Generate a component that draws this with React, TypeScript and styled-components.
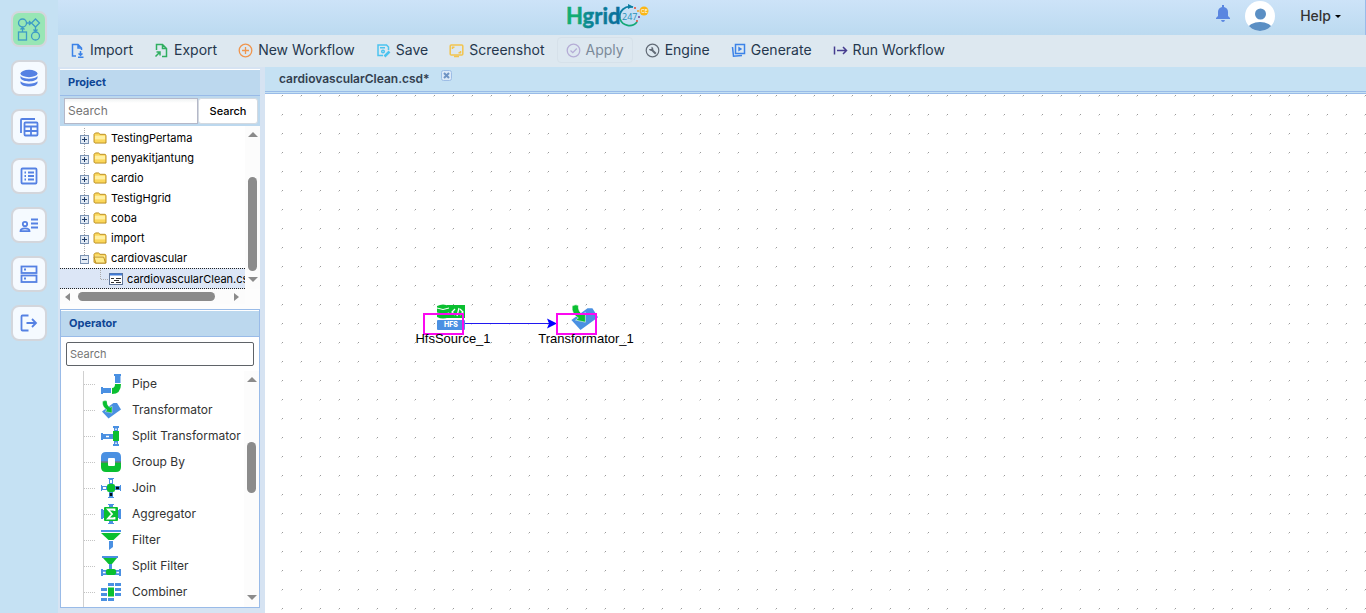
import React from "react";
import styled, { createGlobalStyle } from "styled-components";

const GlobalStyle = createGlobalStyle`
  * { box-sizing: border-box; }
  body { margin: 0; background: #d6e3f2; font-family: Inter, "Liberation Sans", sans-serif; color: #000; }
  button, input { font-family: inherit; margin: 0; }
  button { cursor: pointer; }
  ul { list-style: none; margin: 0; padding: 0; }
  h2 { margin: 0; }
  svg { display: block; flex: none; }
`;

/* ---------- shell ---------- */

const Shell = styled.div`
  display: flex;
  height: 100vh;
  overflow: hidden;
`;

const Rail = styled.nav`
  flex: none;
  width: 58px;
  padding: 11px 0 0 11px;
  display: flex;
  flex-direction: column;
  gap: 13px;
  background: #c5e1f3;
`;

const RailButton = styled.button<{ $active?: boolean }>`
  width: 36px;
  height: 36px;
  padding: 0;
  display: flex;
  align-items: center;
  justify-content: center;
  border: 2px solid #d3d6dc;
  border-radius: 8px;
  background: ${(p) => (p.$active ? "#98e6b5" : "#f5faff")};
  color: ${(p) => (p.$active ? "#3d9cc6" : "#5581e3")};
`;

const Main = styled.div`
  flex: 1;
  min-width: 0;
  display: flex;
  flex-direction: column;
`;

const Header = styled.header`
  flex: none;
  height: 35px;
  display: grid;
  grid-template-columns: 1fr auto 1fr;
  align-items: center;
  background: linear-gradient(#cde3f8, #bbdaf0);
  border-right: 1px solid #99bbe8;
`;

const Brand = styled.div`
  grid-column: 2;
  margin-right: 208px;
`;

const Account = styled.div`
  grid-column: 3;
  justify-self: end;
  display: flex;
  align-items: center;
  padding-right: 24px;
`;

const IconButton = styled.button`
  padding: 0;
  border: 0;
  background: none;
  display: flex;
`;

const BellButton = styled(IconButton)`
  margin: 0 15px 8px 0;
`;

const ProfileButton = styled(IconButton)`
  margin-bottom: 3px;
`;

const HelpButton = styled(IconButton)`
  align-items: center;
  gap: 4px;
  margin: 0 0 3px 25px;
  font-size: 14px;
  line-height: 20px;
  font-weight: 500;
  color: #333;
`;

const Toolbar = styled.div`
  flex: none;
  height: 32px;
  padding: 2px 3px 4px;
  display: flex;
  gap: 3px;
  background: #dde8f0;
`;

const ToolButton = styled.button`
  height: 26px;
  padding: 0 8px;
  display: flex;
  align-items: center;
  gap: 5px;
  border: 1px solid transparent;
  border-radius: 4px;
  background: none;
  font-size: 14px;
  line-height: 20px;
  color: #25374d;
  white-space: nowrap;
  &:disabled {
    color: #7b8a99;
    border-color: #d6e1ea;
  }
`;

const Workspace = styled.div`
  flex: 1;
  min-height: 0;
  display: flex;
  gap: 5px;
`;

const Side = styled.aside`
  flex: none;
  width: 202px;
  padding: 2px 0 5px 2px;
  display: flex;
  flex-direction: column;
`;

/* ---------- panels ---------- */

const PanelTitle = styled.h2`
  flex: none;
  height: 27px;
  padding: 0 8px;
  border-top: 1px solid #fff;
  border-bottom: 1px solid #99bbe8;
  background: #bcd8ee;
  color: #0d4595;
  font-size: 11px;
  line-height: 25px;
  font-weight: 700;
`;

const ProjectPanel = styled.section`
  flex: none;
  background: #fff;
`;

const ProjectSearch = styled.form`
  display: flex;
  height: 30px;
  padding: 2px 2px 2px 4px;
  background: #bcd8ee;
`;

const ProjectInput = styled.input`
  flex: 1;
  min-width: 0;
  padding: 0 3px 1px;
  border: 1px solid #b5b8c8;
  background: linear-gradient(#f0f3f3, #fff 4px);
  font-size: 12px;
  outline: 0;
  &::placeholder { color: #757575; }
`;

const SearchButton = styled.button`
  width: 60px;
  padding: 0;
  border: 1px solid #d3d9e0;
  border-radius: 3px;
  background: #fff;
  font-size: 11px;
  font-weight: 500;
  color: #000;
`;

const TreeBox = styled.div`
  display: flex;
  height: 163px;
`;

const TreeList = styled.ul`
  flex: 1;
  min-width: 0;
  padding-top: 2px;
  overflow: hidden;
`;

const TreeItem = styled.li<{ $selected?: boolean }>`
  height: ${(p) => (p.$selected ? 21 : 20)}px;
  padding-left: ${(p) => (p.$selected ? 40 : 20)}px;
  display: flex;
  align-items: center;
  gap: 4px;
  white-space: nowrap;
  font-size: 11px;
  line-height: 18px;
  color: #000;
  border-top: ${(p) => (p.$selected ? "1px dotted #222" : "0")};
  border-bottom: ${(p) => (p.$selected ? "1px dotted #222" : "0")};
  background: ${(p) => (p.$selected ? "#dce6f6" : "none")};
`;

const Elbow = styled.svg`
  margin-right: -4px;
`;

const Bar = styled.div<{ $row?: boolean }>`
  flex: none;
  display: flex;
  flex-direction: ${(p) => (p.$row ? "row" : "column")};
  align-items: center;
  ${(p) => (p.$row ? "height: 15px; padding: 0 6px 0 5px;" : "width: 15px; padding: 6px 0 7px;")}
  background: #fcfcfc;
`;

const Thumb = styled.div<{ $before: number; $size: number; $row?: boolean }>`
  border-radius: 5px;
  background: #8b8b8b;
  flex: none;
  ${(p) =>
    p.$row
      ? `width: ${p.$size}px; height: 9px; margin: 0 auto 0 ${p.$before}px;`
      : `height: ${p.$size}px; width: 9px; margin: ${p.$before}px 0 auto;`}
`;

const TreeColumn = styled.div`
  flex: 1;
  min-width: 0;
  display: flex;
  flex-direction: column;
`;

const HorizontalBar = styled.div`
  height: 20px;
  padding: 0 15px 5px 0;
  background: #fdfdfd;
`;

const OperatorPanel = styled.section`
  flex: 1;
  min-height: 0;
  display: flex;
  flex-direction: column;
  border: 1px solid #99bbe8;
  background: #fff;
`;

const OperatorInput = styled.input`
  flex: none;
  height: 24px;
  margin: 5px 5px;
  padding: 0 3px;
  border: 1px solid #5f6368;
  border-radius: 2px;
  font-size: 11px;
  outline: 0;
  &::placeholder { color: #757575; }
`;

const OperatorBox = styled.div`
  flex: 1;
  min-height: 0;
  display: flex;
  overflow: hidden;
`;

const OperatorList = styled.ul`
  flex: 1;
  min-width: 0;
  margin-left: 22px;
  border-left: 1px solid #d0d0d0;
`;

const OperatorItem = styled.li`
  height: 26px;
  display: flex;
  align-items: center;
  font-size: 12px;
  line-height: 20px;
  color: #333;
  white-space: nowrap;
  &::before {
    content: "";
    width: 11px;
    margin-right: 6px;
    border-top: 1px dotted #c4c4c4;
  }
  svg { margin-right: 11px; }
`;

/* ---------- editor ---------- */

const Editor = styled.main`
  flex: 1;
  min-width: 0;
  display: flex;
  flex-direction: column;
`;

const TabStrip = styled.div`
  flex: none;
  height: 27px;
  padding: 0 14px;
  display: flex;
  gap: 11px;
  background: #c5e1f3;
  border-bottom: 3px double #99bbe8;
  font-size: 12px;
  line-height: 23px;
  font-weight: 600;
  color: #333f4f;
`;

const CloseButton = styled(IconButton)`
  margin-top: 3px;
  height: 11px;
`;

const Canvas = styled.div`
  position: relative;
  flex: 1;
  overflow: hidden;
  background: #fff;
`;

const GridLayer = styled.svg`
  width: 100%;
  height: 100%;
`;

const NodeMark = styled.div<{ $x: number; $y: number }>`
  position: absolute;
  left: ${(p) => p.$x}px;
  top: ${(p) => p.$y}px;
`;

const Selection = styled(NodeMark)`
  width: 41px;
  height: 22px;
  border: 2px solid #fb09f0;
`;

const NodeLabel = styled(NodeMark)`
  transform: translateX(-50%);
  font: 13px/16px "Liberation Sans", Arial, sans-serif;
  white-space: nowrap;
`;

/* ---------- small icons ---------- */

const B = "#4a90e2";
const G = "#0abf30";

const Arrow = ({ dir }: { dir: "up" | "down" | "left" | "right" }) => {
  const shapes = { up: "M0 5L5 0L10 5Z", down: "M0 0L5 5L10 0Z", left: "M5 0L0 4L5 8Z", right: "M0 0L5 4L0 8Z" };
  const flat = dir === "up" || dir === "down";
  return (
    <svg width={flat ? 10 : 5} height={flat ? 5 : 8}>
      <path d={shapes[dir]} fill="#8b8b8b" />
    </svg>
  );
};

const Stroke = ({ size = 20, color = "currentColor", width = 1.5, box = 20, children }: any) => (
  <svg width={size} height={size} viewBox={`0 0 ${box} ${box}`} fill="none" stroke={color} strokeWidth={width}>
    {children}
  </svg>
);

const railItems = [
  {
    label: "Workflow",
    icon: (
      <Stroke size={24} box={24} width={1.3}>
        <circle cx="5.500" cy="6" r="4" />
        <path d="M18.500 2L22.500 6L18.500 10L14.500 6Z" />
        <rect x="1.500" y="15" width="8" height="8" />
        <circle cx="18.500" cy="19" r="4" />
        <path d="M9.500 6H14M12 4L14 6L12 8M5.500 15V10.500M3.500 12.500L5.500 10.500L7.500 12.500M18.500 10V14.500M16.500 12.500L18.500 14.500L20.500 12.500" />
      </Stroke>
    ),
  },
  {
    label: "Data",
    icon: (
      <svg width="18" height="18" viewBox="0 0 18 18" fill="currentColor">
        <ellipse cx="9" cy="4.500" rx="8.500" ry="3.700" />
        <path d="M.5 7C3 10.500 15 10.500 17.500 7V9C16 13.500 2 13.500 .5 9Z" />
        <path d="M.5 12.200C3 15.500 15 15.500 17.500 12.200V14C16 18.700 2 18.700 .5 14Z" />
      </svg>
    ),
  },
  {
    label: "Tables",
    icon: (
      <Stroke width={1.8}>
        <path d="M2 16V3Q2 2 3 2H16" />
        <rect x="5.500" y="5.500" width="13" height="13" rx="1" />
        <path d="M5.500 9.500H18.500M5.500 14H18.500M12 9.500V18.500" />
      </Stroke>
    ),
  },
  {
    label: "List",
    icon: (
      <Stroke width={1.8}>
        <rect x="2.500" y="2.500" width="15" height="15" rx="1" />
        <path d="M5.500 6.500H7M9 6.500H15M5.500 10H7M9 10H15M5.500 13.500H7M9 13.500H15" />
      </Stroke>
    ),
  },
  {
    label: "Users",
    icon: (
      <Stroke width={1.8}>
        <circle cx="6" cy="9" r="2.200" />
        <path d="M1.500 16.200C1.500 12.500 10.500 12.500 10.500 16.200ZM12 4.500H19M12 8.500H19M12 12.500H19" />
      </Stroke>
    ),
  },
  {
    label: "Server",
    icon: (
      <Stroke width={1.8}>
        <rect x="2.500" y="2.500" width="15" height="6.500" />
        <rect x="2.500" y="11.500" width="15" height="6.500" />
        <path d="M5 5.500H7M5 14.500H7" />
      </Stroke>
    ),
  },
  {
    label: "Log out",
    icon: (
      <Stroke width={1.8}>
        <path d="M9.500 2.500H3.500Q2.500 2.500 2.500 3.500V16.500Q2.500 17.500 3.500 17.500H9.500M7.500 10H17M13 6L17 10L13 14" />
      </Stroke>
    ),
  },
];

const tools = [
  {
    label: "Import",
    icon: (
      <Stroke size={15} box={15} color="#3b82e8">
        <path d="M6 13H2.500V1.500H8L11.500 5V7M8 1.500V5H11.500M10.500 8V12M8.500 10.500L10.500 12.300L12.500 10.500M8 14.300H13.500" />
      </Stroke>
    ),
  },
  {
    label: "Export",
    icon: (
      <Stroke size={15} box={15} color="#2fae60">
        <path d="M2.500 7V1.500H8.500L12.500 5.500V13.500H8M8.500 1.500V5.500H12.500M1.500 13.500L6 9M2.500 9H6V12.500" />
      </Stroke>
    ),
  },
  {
    label: "New Workflow",
    icon: (
      <Stroke size={15} box={15} color="#f0954d" width={1.3}>
        <circle cx="7.500" cy="7.500" r="6.300" />
        <path d="M7.500 4V11M4 7.500H11" />
      </Stroke>
    ),
  },
  {
    label: "Save",
    icon: (
      <Stroke size={15} box={15} color="#4cc3ef">
        <path d="M7 12.500H2V2H10.500L12.500 4V7M4 4.700H9" />
        <circle cx="7" cy="8.500" r="1.300" />
        <path d="M8.500 13.500L13.500 8.500" strokeWidth={2.5} />
      </Stroke>
    ),
  },
  {
    label: "Screenshot",
    icon: (
      <Stroke size={15} box={15} color="#f2c44e">
        <rect x="1.200" y="2" width="12.600" height="10" rx="1" />
        <path d="M3.500 6V4.300H5.500M11.500 8V9.800H9.500M5 13.500H10" />
      </Stroke>
    ),
  },
  {
    label: "Apply",
    disabled: true,
    icon: (
      <Stroke size={15} box={15} color="#b5add6" width={1.3}>
        <circle cx="7.500" cy="7.500" r="6.300" />
        <path d="M4.500 7.500L6.800 9.700L10.800 5.500" />
      </Stroke>
    ),
  },
  {
    label: "Engine",
    icon: (
      <Stroke size={15} box={15} color="#626b76" width={1.2}>
        <circle cx="7.500" cy="7.500" r="6.300" />
        <path d="M7 7L10.800 10.800" strokeWidth={2} />
        <path d="M4 6A2.500 2.500 0 0 0 8 7.500A2.500 2.500 0 0 0 6.500 3.800V6H4Z" fill="#626b76" stroke="none" />
      </Stroke>
    ),
  },
  {
    label: "Generate",
    icon: (
      <Stroke size={15} box={15} color="#3b82e8">
        <rect x="4.500" y="1.500" width="9" height="9" />
        <path d="M1.500 4L2.500 13.300L11 12.500" />
        <path d="M7.300 3.500L11.300 6L7.300 8.500Z" fill="#3b82e8" stroke="none" />
      </Stroke>
    ),
  },
  {
    label: "Run Workflow",
    icon: (
      <Stroke size={15} box={15} color="#463c8f">
        <path d="M1.500 3.500V11.500M4 7.500H13.500M10 4L13.500 7.500L10 11" />
      </Stroke>
    ),
  },
];

const Expander = ({ open }: { open?: boolean }) => (
  <svg width="9" height="20">
    <path d={open ? "M4.500 0V7" : "M4.500 0V20"} stroke="#aaa" strokeDasharray="1 1" />
    <rect x="0.500" y="7.500" width="8" height="8" fill="#e3ebf5" stroke="#7b93b4" />
    <path d={open ? "M2 11.500H7" : "M2 11.500H7M4.500 9V14"} stroke="#1f3c68" />
  </svg>
);

const Folder = ({ open }: { open?: boolean }) => (
  <svg width="14" height="12" viewBox="0 0 14 13">
    <path d="M.5 11V2.500L2 1H5.500L7 2.500H12.500L13.500 3.500V12H1.500Z" fill="#fbd75b" stroke="#b78a1c" />
    <path d="M1.500 4H12.500V8H1.500Z" fill="#fff0a3" />
    {open && <path d="M.5 5.500H11L13 12H2.500Z" fill="#ffeb8a" stroke="#b78a1c" />}
  </svg>
);

const FileIcon = () => (
  <svg width="14" height="12">
    <rect x="0.500" y="0.500" width="13" height="11" fill="#fff" stroke="#5d7396" />
    <path d="M1 1.500H13" stroke="#3f7bd8" strokeWidth="2" />
    <path d="M2 5.500H5M7 5.500H12M5 7.500H10M2 9.500H5M7 9.500H12" stroke="#333" />
  </svg>
);

const TransformShape = () => (
  <>
    <path d="M1 11.500L12.500 3H16L20 9.500L7.500 18.500Z" fill={B} />
    <path d="M1.500 1.500Q4 0 6 1Q5.500 5 9 7.500L11 6V13L4 11.500L6 10Q1 7 1.500 1.500Z" fill={G} stroke="#fff" strokeWidth=".4" />
  </>
);

const operators: [string, React.ReactNode][] = [
  ["Pipe", <><path d="M13 0H20V2H19.500V9H14V2H13ZM0 13H2V14H10V19H2V20H0Z" fill={B} /><path d="M14 10H20Q20 20 11 20V14Q14 14 14 10Z" fill={G} /></>],
  ["Transformator", <TransformShape />],
  ["Split Transformator", <><path d="M12 0H18V2H17V18H18V20H12V18H13V2H12ZM0 7H2V8H12V13H2V14H0Z" fill={B} /><path d="M12 5H18V15H12Z" fill={G} /><path d="M5 10.500H8M15 2.500V4M15 16.500V18" stroke="#fff" strokeWidth="1.500" /></>],
  ["Group By", <><path d="M0 9.500V5Q0 0 5 0H15Q20 0 20 5V9.500Z" fill={B} /><path d="M0 10.500V15Q0 20 5 20H15Q20 20 20 15V10.500Z" fill={G} /><path d="M0 10H20" stroke="#234" /><rect x="7" y="6" width="7" height="8" rx="1" fill="#fff" /></>],
  ["Join", <><path d="M7 0H13V1H12V8H19V7H20V13H19V12H12V19H13V20H7V19H8V12H1V13H0V7H1V8H8V1H7Z" fill={B} /><rect x="6" y="6" width="8" height="8" rx="2" fill={G} /><path d="M10 2V5M2 10H5" stroke="#fff" strokeWidth="2" /><path d="M10 15V18M15 10H18" stroke="#011" strokeWidth="2.500" /></>],
  ["Aggregator", <><path d="M7 0H13V1H12V19H13V20H7V19H8V1H7ZM0 5H2V6H18V5H20V15H18V14H2V15H0Z" fill={B} /><rect x="3" y="3" width="14" height="14" rx="1" fill={G} /><path d="M13.500 7V5.500H7L11 10L7 14.500H13.500V13" fill="none" stroke="#fff" strokeWidth="1.800" /></>],
  ["Filter", <><path d="M0 0H20V2H0ZM8 11H12V17L8 20Z" fill={B} /><path d="M0 3H20L12.500 10H7.500Z" fill={G} /></>],
  ["Split Filter", <><path d="M1 0H17V2H1ZM8 8H11V14H18V13H20V20H18V19H2V20H0V13H2V14H8Z" fill={B} /><path d="M2 2H16L11 8H7.500Z" fill={G} /><rect x="5" y="13" width="10" height="6" rx="2" fill={G} /><path d="M2 16.500H4.500M15.500 16.500H18" stroke="#fff" strokeWidth="1.500" /></>],
  ["Combiner", <><path d="M7 2.500H13M14 2.500H20M0 7.500H6M14 7.500H20M0 12.500H6M14 12.500H20M0 17.500H6M7 17.500H13" stroke={B} strokeWidth="3" /><path d="M7 5.500H13V14.500H7Z" fill={G} /></>],
];

const folders = ["TestingPertama", "penyakitjantung", "cardio", "TestigHgrid", "coba", "import", "cardiovascular"];

const Logo = () => (
  <svg width="82" height="32" viewBox="0 0 82 32" role="img" aria-label="Hgrid247">
    <defs>
      <linearGradient id="brand" x1="0" x2="1">
        <stop offset="0.200" stopColor="#12ad72" />
        <stop offset="0.400" stopColor="#0b8793" />
        <stop offset="1" stopColor="#0a6d9c" />
      </linearGradient>
    </defs>
    <text x="-1" y="22" fill="url(#brand)" stroke="url(#brand)" strokeWidth=".5" fontFamily="Lato, sans-serif" fontWeight="700" fontSize="22">Hgrid</text>
    <path d="M66 5.200A10 10 0 0 0 53 17" fill="none" stroke="#0c7ea3" strokeWidth="1.800" />
    <path d="M53 17A10 10 0 0 0 70 20" fill="none" stroke="#14a878" strokeWidth="1.800" />
    <path d="M61 2L66 4.500L61 7Z" fill="#0c7ea3" />
    <text x="55" y="18" fill="#278fb5" fontFamily="'Open Sans', sans-serif" fontSize="9">247</text>
    <circle cx="68" cy="6" r="1" fill="#e34a32" />
    <circle cx="71" cy="9" r="1" fill="#f0a029" />
    <circle cx="72" cy="15" r="1" fill="#704296" />
    <circle cx="70" cy="19" r="1" fill="#e34a32" />
    <circle cx="77" cy="9" r="4.500" fill="#fbb615" />
    <text x="74" y="11" fill="#fff" fontFamily="Inter, sans-serif" fontSize="5">CE</text>
  </svg>
);

const Flow = () => (
  <Canvas>
    <GridLayer>
      <defs>
        <pattern id="dots" x="16" y="1" width="19" height="19" patternUnits="userSpaceOnUse">
          <rect x="1" width="1" height="1" fill="#999" />
          <rect y="1" width="1" height="1" fill="#ddd" />
        </pattern>
      </defs>
      <rect width="100%" height="100%" fill="url(#dots)" />
      <path d="M200 229.500H284" stroke="#2018f0" />
      <path d="M282 224.500L292 229.500L282 234.500L284 229.500Z" fill="#0000ff" />
      <g transform="translate(172 210)">
        <path d="M10 1H28V14H10Z" fill={G} />
        <path d="M0 2Q6-1 12 2V13Q6 16 0 13Z" fill={G} />
        <path d="M0 4Q6 7 12 4M0 9Q6 12 12 9" fill="none" stroke="#fff" />
        <path d="M18 5L15 8L18 11M23 5L26 8L23 11M22 4L20 12" fill="none" stroke="#fff" strokeWidth="1.300" />
        <rect y="16" width="28" height="10" rx="1" fill={B} />
        <text x="7" y="23" fontFamily="Inter, sans-serif" fontSize="7" fontWeight="800" fill="#fff">HFS</text>
      </g>
      <g transform="translate(305 210) scale(1.400)"><TransformShape /></g>
    </GridLayer>
    <Selection $x={158} $y={219} />
    <Selection $x={291} $y={219} />
    <NodeLabel $x={188} $y={237}>HfsSource_1</NodeLabel>
    <NodeLabel $x={321} $y={237}>Transformator_1</NodeLabel>
  </Canvas>
);

export default function App() {
  return (
    <>
      <GlobalStyle />
      <Shell>
        <Rail>
          {railItems.map((r, i) => (
            <RailButton key={r.label} $active={i === 0} aria-label={r.label}>{r.icon}</RailButton>
          ))}
        </Rail>
        <Main>
          <Header>
            <Brand><Logo /></Brand>
            <Account>
              <BellButton aria-label="Notifications">
                <svg width="14" height="17" viewBox="0 0 14 17" fill="#5a86e0">
                  <path d="M6 0H8V2Q12 3 12 7V11L14 13V14H0V13L2 11V7Q2 3 6 2ZM5 15H9Q8.500 17 7 17Q5.500 17 5 15Z" />
                </svg>
              </BellButton>
              <ProfileButton aria-label="Profile">
                <svg width="30" height="30" viewBox="0 0 30 30">
                  <clipPath id="face"><circle cx="15" cy="15" r="15" /></clipPath>
                  <g clipPath="url(#face)">
                    <rect width="30" height="30" fill="#fff" />
                    <circle cx="15.500" cy="13" r="5.500" fill="#5b8fc4" />
                    <ellipse cx="15" cy="28" rx="12" ry="7" fill="#5b8fc4" />
                  </g>
                </svg>
              </ProfileButton>
              <HelpButton>
                Help
                <svg width="6" height="3"><path d="M0 0H6L3 3Z" fill="#000" /></svg>
              </HelpButton>
            </Account>
          </Header>
          <Toolbar>
            {tools.map((t) => (
              <ToolButton key={t.label} disabled={t.disabled}>{t.icon}{t.label}</ToolButton>
            ))}
          </Toolbar>
          <Workspace>
            <Side>
              <ProjectPanel>
                <PanelTitle>Project</PanelTitle>
                <ProjectSearch onSubmit={(e) => e.preventDefault()}>
                  <ProjectInput placeholder="Search" aria-label="Search projects" />
                  <SearchButton>Search</SearchButton>
                </ProjectSearch>
                <TreeBox>
                  <TreeColumn>
                    <TreeList>
                      {folders.map((f, i) => (
                        <TreeItem key={f}>
                          <Expander open={i === 6} />
                          <Folder open={i === 6} />
                          <span>{f}</span>
                        </TreeItem>
                      ))}
                      <TreeItem $selected>
                        <Elbow width="9" height="18" viewBox="0 0 9 18"><path d="M.5 0V9.500H9" fill="none" stroke="#aaa" strokeDasharray="1 1" /></Elbow>
                        <FileIcon />
                        <span>cardiovascularClean.csd</span>
                      </TreeItem>
                    </TreeList>
                  </TreeColumn>
                  <Bar><Arrow dir="up" /><Thumb $before={40} $size={94} /><Arrow dir="down" /></Bar>
                </TreeBox>
                <HorizontalBar>
                  <Bar $row><Arrow dir="left" /><Thumb $row $before={8} $size={137} /><Arrow dir="right" /></Bar>
                </HorizontalBar>
              </ProjectPanel>
              <OperatorPanel>
                <PanelTitle>Operator</PanelTitle>
                <OperatorInput placeholder="Search" aria-label="Search operators" />
                <OperatorBox>
                  <OperatorList>
                    {operators.map(([name, art]) => (
                      <OperatorItem key={name}>
                        <svg width="20" height="20" viewBox="0 0 20 20">{art}</svg>
                        {name}
                      </OperatorItem>
                    ))}
                  </OperatorList>
                  <Bar><Arrow dir="up" /><Thumb $before={60} $size={51} /><Arrow dir="down" /></Bar>
                </OperatorBox>
              </OperatorPanel>
            </Side>
            <Editor>
              <TabStrip>
                cardiovascularClean.csd*
                <CloseButton aria-label="Close tab">
                  <svg width="11" height="11">
                    <rect x="0.500" y="0.500" width="10" height="10" rx="2" fill="#dce9f8" stroke="#9dbde6" />
                    <path d="M3 3L8 8M8 3L3 8" stroke="#6f93c4" strokeWidth="2" />
                  </svg>
                </CloseButton>
              </TabStrip>
              <Flow />
            </Editor>
          </Workspace>
        </Main>
      </Shell>
    </>
  );
}
